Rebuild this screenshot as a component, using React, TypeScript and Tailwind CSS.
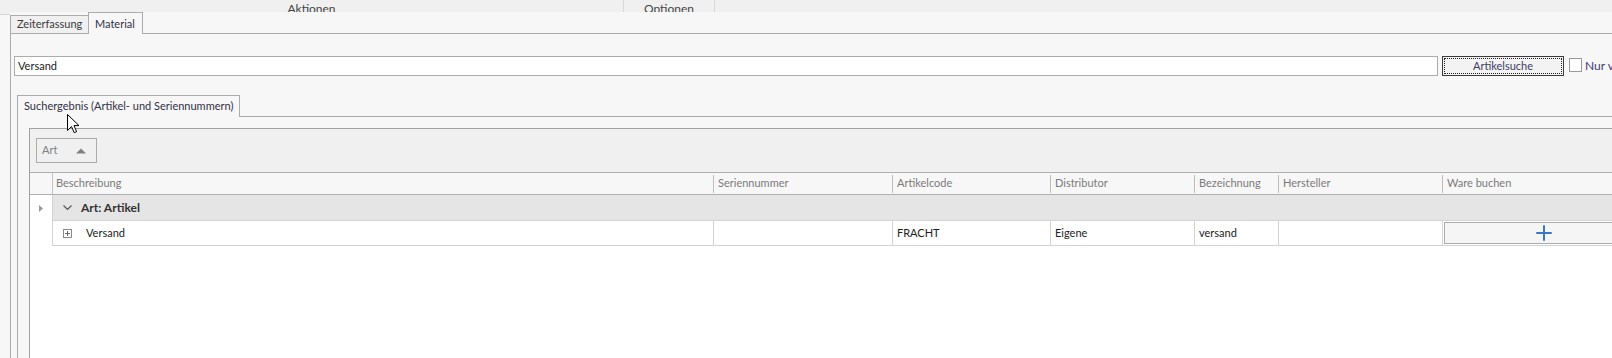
import { Plus } from "lucide-react";

type Col = { key: string; label: string; width: number };

const columns: Col[] = [
  { key: "serien", label: "Seriennummer", width: 179 },
  { key: "code", label: "Artikelcode", width: 158 },
  { key: "dist", label: "Distributor", width: 144 },
  { key: "bez", label: "Bezeichnung", width: 84 },
  { key: "herst", label: "Hersteller", width: 164 },
  { key: "ware", label: "Ware buchen", width: 220 },
];

const row: Record<string, string> = {
  serien: "",
  code: "FRACHT",
  dist: "Eigene",
  bez: "versand",
  herst: "",
};

function Cursor() {
  return (
    <svg
      className="absolute left-[67px] top-[114px]"
      width="13"
      height="20"
      viewBox="0 0 13 20"
    >
      <path
        d="M0.5 0.5 L0.5 16.5 L4.5 12.5 L7.2 18.7 L9.6 17.7 L7 11.6 L12 11.6 Z"
        fill="#fff"
        stroke="#000"
        strokeWidth="1"
        strokeLinejoin="miter"
      />
    </svg>
  );
}

export default function App() {
  return (
    <div
      className="relative w-[1612px] h-[358px] overflow-hidden bg-[#f7f7f7] flex flex-col text-[11px] text-[#333]"
      style={{ fontFamily: "Lato, 'Noto Sans', sans-serif" }}
    >
      {/* Ribbon leftovers */}
      <div className="h-[12px] shrink-0 flex bg-[#f0f0f0] overflow-hidden text-[12px] text-[#444]">
        <div className="w-[624px] border-r border-[#d8d8d8] text-center pt-[1px] leading-[16px]">
          Aktionen
        </div>
        <div className="w-[91px] border-r border-[#d8d8d8] text-center pt-[1px] leading-[16px]">
          Optionen
        </div>
      </div>

      <div className="flex-1 flex min-h-0">
        {/* left strip */}
        <div className="w-[10px] shrink-0 flex flex-col">
          <div className="h-[2px] bg-[#f0f0f0]" />
          <div className="flex-1 border-t border-[#d6d6d6]" />
        </div>

        {/* Main tab control */}
        <div className="flex-1 flex flex-col min-w-0">
          <div className="h-[22px] shrink-0 flex items-end">
            <div className="h-[19px] w-[78px] shrink-0 border-l border-t border-b border-[#acacac] bg-[#f0f0f0] pl-[6px] flex items-center text-[#3a3a3a]">
              Zeiterfassung
            </div>
            <div className="h-[22px] w-[55px] shrink-0 border-l border-t border-r border-[#acacac] bg-[#f7f7f7] pl-[6px] pt-[1px] flex items-center text-[#303048]">
              Material
            </div>
            <div className="flex-1 h-full border-b border-[#acacac]" />
          </div>

          <div className="flex-1 min-h-0 flex flex-col border-l border-[#acacac] pt-[22px] pl-[3px]">
            {/* Search row */}
            <div className="h-[20px] shrink-0 flex">
              <div className="w-[1424px] shrink-0 border border-[#acacac] bg-white pl-[3px] flex items-center text-[#222]">
                Versand
              </div>
              <div className="ml-[4px] w-[122px] shrink-0 border border-[#3c3c3c] bg-[#f3f3f3] p-[1px]">
                <div className="h-full border border-dotted border-[#222] flex items-center justify-center text-[#3c3c68]">
                  Artikelsuche
                </div>
              </div>
              <div className="ml-[5px] mt-[2px] w-[13px] h-[14px] shrink-0 border border-[#9a9a9a] bg-white" />
              <div className="ml-[3px] shrink-0 whitespace-nowrap flex items-center text-[#3c3c78] text-[12px]">
                Nur verfügbare Artikel
              </div>
            </div>

            {/* Inner tab control */}
            <div className="mt-[19px] ml-[3px] flex-1 min-h-0 flex flex-col">
              <div className="h-[22px] shrink-0 flex items-end">
                <div className="h-[22px] w-[223px] shrink-0 border-l border-t border-r border-[#acacac] bg-[#f7f7f7] pl-[6px] flex items-center text-[#303048]">
                  Suchergebnis (Artikel- und Seriennummern)
                </div>
                <div className="flex-1 h-full border-b border-[#acacac]" />
              </div>

              <div className="flex-1 min-h-0 flex flex-col border-l border-[#acacac] pt-[11px] pl-[11px]">
                {/* Grid */}
                <div className="flex-1 min-h-0 flex flex-col border-l border-t border-[#a0a0a0] bg-white">
                  {/* Group panel */}
                  <div className="h-[43px] shrink-0 bg-[#f0f0f0] pl-[6px] pt-[9px]">
                    <div className="w-[61px] h-[25px] border border-[#acacac] bg-[#f0f0f0] flex items-center pl-[5px] text-[#808080]">
                      <span>Art</span>
                      <svg className="ml-[19px]" width="10" height="6" viewBox="0 0 10 6">
                        <path d="M0 5.5 L5 0.5 L10 5.5 Z" fill="#808080" />
                      </svg>
                    </div>
                  </div>

                  {/* Header */}
                  <div className="h-[23px] shrink-0 flex border-t border-b border-[#b0b0b0] bg-[#f7f7f7] text-[#7a7a7a]">
                    <div className="w-[22px] shrink-0" />
                    <div className="w-[661px] shrink-0 border-l border-[#c4c4c4] pl-[3px] flex items-center">
                      Beschreibung
                    </div>
                    {columns.map((c) => (
                      <div
                        key={c.key}
                        className="shrink-0 flex items-center"
                        style={{ width: c.width }}
                      >
                        <span className="w-px h-[18px] bg-[#bdbdbd]" />
                        <span className="ml-[4px]">{c.label}</span>
                      </div>
                    ))}
                  </div>

                  {/* Group row */}
                  <div className="h-[26px] shrink-0 flex">
                    <div className="w-[22px] shrink-0 flex items-center pl-[9px]">
                      <svg width="4" height="7" viewBox="0 0 4 7">
                        <path d="M0 0 L4 3.5 L0 7 Z" fill="#9a9a9a" />
                      </svg>
                    </div>
                    <div className="flex-1 border-l border-b border-[#d4d4d4] bg-[#e5e5e5] flex items-center pl-[10px]">
                      <svg width="9" height="6" viewBox="0 0 9 6">
                        <path d="M0.5 0.5 L4.5 4.5 L8.5 0.5" fill="none" stroke="#555" strokeWidth="1.2" />
                      </svg>
                      <span className="ml-[9px] font-bold text-[12px] text-[#333]">Art: Artikel</span>
                    </div>
                  </div>

                  {/* Data row */}
                  <div className="h-[25px] shrink-0 flex text-[#222]">
                    <div className="w-[22px] shrink-0" />
                    <div className="flex-1 flex border-l border-b border-[#d4d4d4]">
                      <div className="w-[660px] shrink-0 flex items-center pl-[10px]">
                        <span className="w-[9px] h-[9px] border border-[#8a8a8a] relative">
                          <span className="absolute left-[1px] top-[3px] w-[5px] h-px bg-[#666]" />
                          <span className="absolute left-[3px] top-[1px] w-px h-[5px] bg-[#666]" />
                        </span>
                        <span className="ml-[14px]">Versand</span>
                      </div>
                      {columns.map((c) =>
                        c.key === "ware" ? (
                          <div
                            key={c.key}
                            className="shrink-0 border-l border-[#d4d4d4] p-[1px] pr-0"
                            style={{ width: c.width }}
                          >
                            <div className="h-full w-[200px] border border-[#acacac] bg-[#f5f5f5] flex items-center justify-center">
                              <Plus size={24} strokeWidth={2} color="#3b78c4" />
                            </div>
                          </div>
                        ) : (
                          <div
                            key={c.key}
                            className="shrink-0 border-l border-[#d4d4d4] pl-[4px] flex items-center"
                            style={{ width: c.width }}
                          >
                            {row[c.key]}
                          </div>
                        )
                      )}
                    </div>
                  </div>

                  <div className="flex-1" />
                </div>
              </div>
            </div>
          </div>
        </div>
      </div>

      <Cursor />
    </div>
  );
}
